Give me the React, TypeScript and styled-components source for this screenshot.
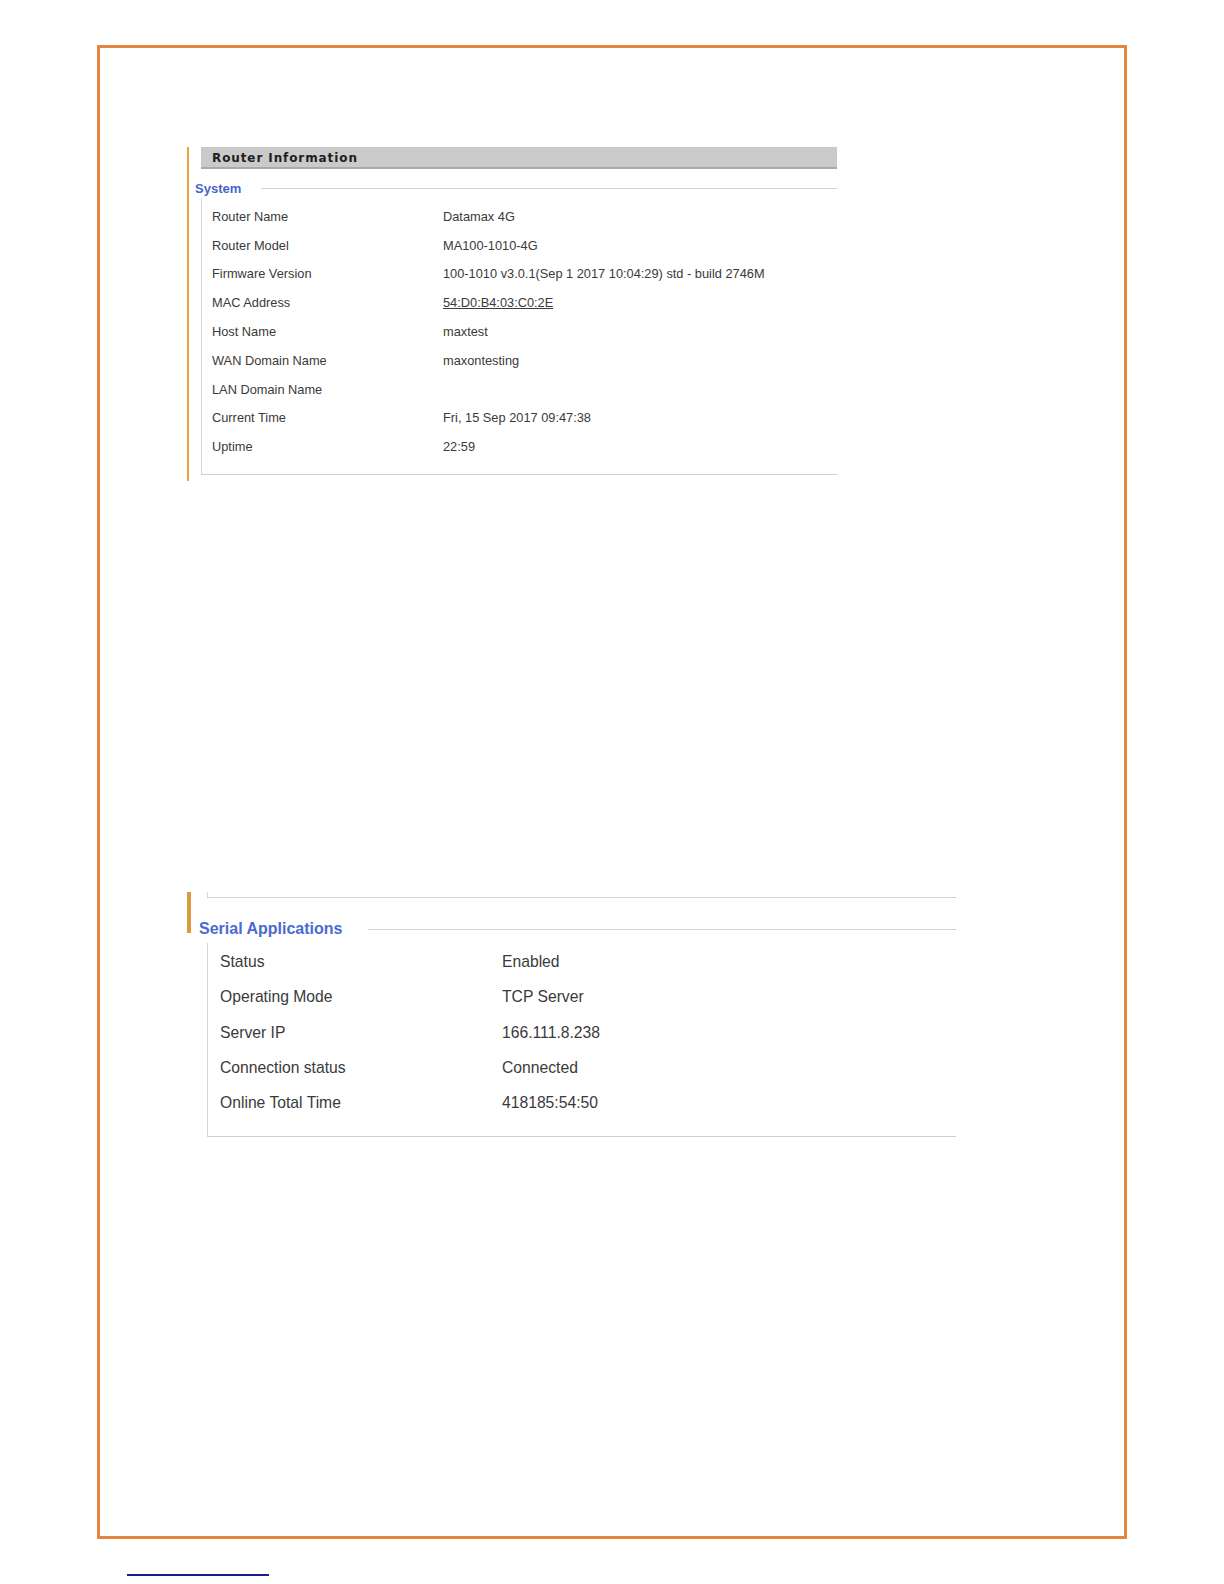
import React from 'react';
import styled, { createGlobalStyle } from 'styled-components';

const GlobalStyle = createGlobalStyle`
  html, body {
    margin: 0;
    padding: 0;
    background: #fff;
  }
  body {
    font-family: "Liberation Sans", Arial, sans-serif;
    color: #333;
  }
`;

const systemRows = [
  { label: 'Router Name', value: 'Datamax 4G' },
  { label: 'Router Model', value: 'MA100-1010-4G' },
  { label: 'Firmware Version', value: '100-1010 v3.0.1(Sep 1 2017 10:04:29) std - build 2746M' },
  { label: 'MAC Address', value: '54:D0:B4:03:C0:2E', link: true },
  { label: 'Host Name', value: 'maxtest' },
  { label: 'WAN Domain Name', value: 'maxontesting' },
  { label: 'LAN Domain Name', value: '' },
  { label: 'Current Time', value: 'Fri, 15 Sep 2017 09:47:38' },
  { label: 'Uptime', value: '22:59' },
];

const serialRows = [
  { label: 'Status', value: 'Enabled' },
  { label: 'Operating Mode', value: 'TCP Server' },
  { label: 'Server IP', value: '166.111.8.238' },
  { label: 'Connection status', value: 'Connected' },
  { label: 'Online Total Time', value: '418185:54:50' },
];

export default function App() {
  return (
    <>
      <GlobalStyle />
      <Frame>
        <InfoPanel>
          <PanelHeader>Router Information</PanelHeader>
          <LegendRow>
            <Legend>System</Legend>
            <LegendLine />
          </LegendRow>
          <FieldBody>
            {systemRows.map((row) => (
              <Row key={row.label}>
                <Label>{row.label}</Label>
                {row.link ? <LinkValue>{row.value}</LinkValue> : <Value>{row.value}</Value>}
              </Row>
            ))}
          </FieldBody>
        </InfoPanel>

        <SerialHead>
          <PrevTail />
          <SerialLegendRow>
            <SerialLegend>Serial Applications</SerialLegend>
            <LegendLine />
          </SerialLegendRow>
        </SerialHead>
        <SerialBody>
          {serialRows.map((row) => (
            <SerialRow key={row.label}>
              <SerialLabel>{row.label}</SerialLabel>
              <SerialValue>{row.value}</SerialValue>
            </SerialRow>
          ))}
        </SerialBody>
      </Frame>
      <FooterLink />
    </>
  );
}

const Frame = styled.div`
  box-sizing: border-box;
  width: 1030px;
  height: 1494px;
  margin: 45px 0 0 97px;
  border: 3px solid #e5863f;
  padding: 99px 0 0 87px;
  display: flex;
  flex-direction: column;
`;

const InfoPanel = styled.section`
  width: 650px;
  border-left: 2px solid #e8a23a;
  padding-bottom: 6px;
  display: flex;
  flex-direction: column;
`;

const PanelHeader = styled.div`
  box-sizing: border-box;
  margin-left: 12px;
  width: 636px;
  height: 22px;
  background: #cacaca;
  border-bottom: 2px solid #a9a9a9;
  padding: 1px 0 0 11px;
  display: flex;
  align-items: center;
  font-family: "DejaVu Sans", Verdana, sans-serif;
  font-weight: bold;
  font-size: 12px;
  letter-spacing: 0.9px;
  color: #1e1e1e;
`;

const LegendRow = styled.div`
  margin: 9px 0 0 6px;
  width: 642px;
  height: 20px;
  display: flex;
  align-items: center;
`;

const Legend = styled.span`
  font-size: 13px;
  font-weight: bold;
  color: #4566c9;
  margin-right: 20px;
`;

const LegendLine = styled.div`
  flex: 1;
  height: 1px;
  background: #d2d2d2;
`;

const FieldBody = styled.div`
  margin-left: 12px;
  width: 636px;
  border-left: 1px solid #d6d6d6;
  border-bottom: 1px solid #d0d0d0;
  padding: 4px 0 13px 10px;
  box-sizing: border-box;
`;

const Row = styled.div`
  height: 28.8px;
  display: flex;
  align-items: center;
  font-size: 12.8px;
`;

const Label = styled.span`
  width: 231px;
  color: #3a3a3a;
`;

const Value = styled.span`
  color: #3a3a3a;
  white-space: nowrap;
`;

const LinkValue = styled(Value)`
  text-decoration: underline;
`;

const SerialHead = styled.div`
  margin-top: 411px;
  width: 765px;
  height: 41px;
  border-left: 4px solid #d99c3c;
  display: flex;
  flex-direction: column;
`;

const PrevTail = styled.div`
  box-sizing: border-box;
  flex-shrink: 0;
  margin-left: 16px;
  width: 749px;
  height: 6px;
  border-left: 1px solid #d6d6d6;
  border-bottom: 1px solid #d2d2d2;
`;

const SerialLegendRow = styled.div`
  flex-shrink: 0;
  margin: 21px 0 0 8px;
  width: 757px;
  height: 20px;
  display: flex;
  align-items: center;
`;

const SerialLegend = styled.span`
  font-size: 16px;
  font-weight: bold;
  color: #4a6bd0;
  margin-right: 26px;
`;

const SerialBody = styled.div`
  box-sizing: border-box;
  margin: 10px 0 0 20px;
  width: 749px;
  border-left: 1px solid #d6d6d6;
  border-bottom: 1px solid #d0d0d0;
  padding: 1px 0 15px 12px;
`;

const SerialRow = styled.div`
  height: 35.4px;
  display: flex;
  align-items: center;
  font-size: 15.7px;
  color: #3a3a3a;
`;

const SerialLabel = styled.span`
  width: 282px;
`;

const SerialValue = styled.span`
  white-space: nowrap;
`;

const FooterLink = styled.div`
  margin: 35px 0 0 127px;
  width: 142px;
  height: 2px;
  background: #1c1c8e;
`;
